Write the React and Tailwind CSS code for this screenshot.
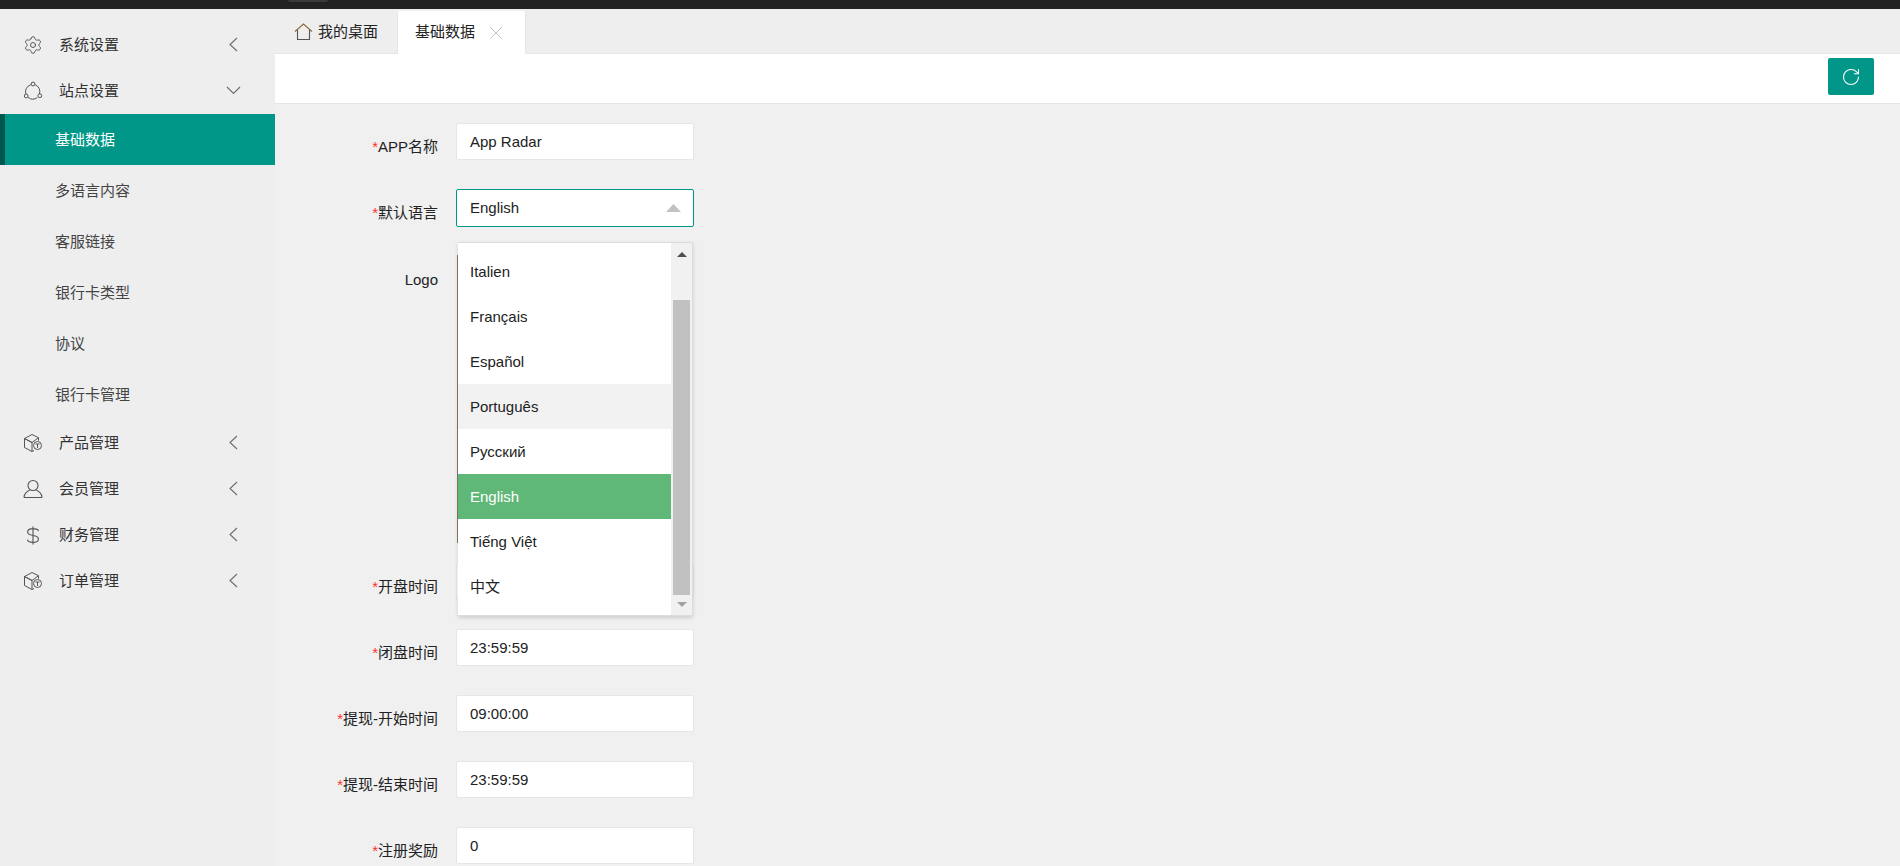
import React from "react";
import { RotateCw, X, Settings } from "lucide-react";

const Chevron = ({ down }) =>
  down ? (
    <svg width="15" height="9" viewBox="0 0 15 9" fill="none" stroke="#6b6b6b" strokeWidth="1.1" className="block">
      <path d="M1 1l6.5 6.5L14 1" />
    </svg>
  ) : (
    <svg width="9" height="15" viewBox="0 0 9 15" fill="none" stroke="#6b6b6b" strokeWidth="1.1" className="block">
      <path d="M8 1L1 7.5 8 14" />
    </svg>
  );

const Cube = () => (
  <svg width="20" height="20" viewBox="0 0 20 20" fill="none" stroke="#555" strokeWidth="1" className="block">
    <path d="M1.5 5.5L9 1.5l6.5 3.2v3M1.5 5.5v9L9 18.5v-9zM1.5 5.5L9 9.5l6.5-4.8M9 18.5l2-1" />
    <circle cx="14.5" cy="12.5" r="4" />
    <path d="M12.5 11h4M14.5 11v4" />
  </svg>
);

const Branch = () => (
  <svg width="20" height="20" viewBox="0 0 20 20" fill="none" stroke="#555" strokeWidth="1" className="block">
    <path d="M7.7 3.8A7.2 7.2 0 0 0 2.9 13M12.2 3.8A7.2 7.2 0 0 1 16.4 13M5.2 16.5a7.6 7.6 0 0 0 9.2 0" />
    <circle cx="10" cy="3" r="1.9" />
    <circle cx="3.2" cy="15" r="1.9" />
    <circle cx="16.8" cy="14.7" r="1.9" />
  </svg>
);

const User = () => (
  <svg width="20" height="20" viewBox="0 0 20 20" fill="none" stroke="#555" strokeWidth="1.1" className="block">
    <circle cx="10" cy="6.5" r="5" />
    <path d="M1 18.5c0-3.8 3.5-6.5 5.8-7.2M19 18.5c0-3.8-3.5-6.5-5.8-7.2M1 18.5h18" />
  </svg>
);

const Dollar = () => (
  <svg width="14" height="19" viewBox="0 0 14 19" fill="none" stroke="#555" strokeWidth="1.1" className="block">
    <path d="M7 0.5v18M12.5 5C12 3 10 2.6 7 2.6 3.8 2.6 1.6 4 1.6 6.1c0 2.3 2.3 2.9 5.4 3.4 3.1.5 5.4 1.1 5.4 3.4 0 2.1-2.2 3.5-5.4 3.5-3.2 0-5.2-.7-5.6-2.7" />
  </svg>
);

const Home = () => (
  <svg width="19" height="18" viewBox="0 0 19 18" fill="none" strokeWidth="1.1" className="block">
    <path d="M1 8.5L9.5 1 18 8.5" stroke="#8a6a3a" />
    <path d="M3.5 7v9.5h12V7" stroke="#555" />
  </svg>
);

const top = [
  { icon: <Settings size={24} strokeWidth={1.15} color="#555" className="-my-[2px]" />, label: "系统设置" },
  { icon: <Branch />, label: "站点设置", open: true },
];
const sub = ["基础数据", "多语言内容", "客服链接", "银行卡类型", "协议", "银行卡管理"];
const bottom = [
  { icon: <Cube />, label: "产品管理" },
  { icon: <User />, label: "会员管理" },
  { icon: <Dollar />, label: "财务管理" },
  { icon: <Cube />, label: "订单管理" },
];

const MenuRow = ({ icon, label, open }) => (
  <div className="flex h-[46px] items-center pl-[23px] text-[15px] text-[#333]">
    <span className="flex w-[20px] justify-center">{icon}</span>
    <span className="ml-[16px] w-[170px]">{label}</span>
    <span className={open ? "-ml-[3px] -mt-[2px]" : "-mt-[2px]"}>
      <Chevron down={open} />
    </span>
  </div>
);

const languages = ["Italien", "Français", "Español", "Português", "Русский", "English", "Tiếng Việt", "中文"];

const Label = ({ children, req = true }) => (
  <div className={"w-[163px] text-right text-[15px] leading-[24px] text-[#222] " + (req ? "pt-[12px]" : "pt-[13px]")}>
    {req && <span className="text-[#f33]">*</span>}
    {children}
  </div>
);

const Field = ({ label, value }) => (
  <div className="mb-[29px] flex">
    <Label>{label}</Label>
    <div className="ml-[18px] flex h-[37px] w-[238px] items-center rounded-[2px] border border-[#e6e6e6] bg-white pl-[13px] pt-[2px] text-[15px] text-[#222]">
      {value}
    </div>
  </div>
);

const Dropdown = () => (
  <div className="absolute left-[2px] top-[53px] z-10 flex h-[374px] w-[235px] border border-l-0 border-[#dcdcdc] bg-white shadow-[0_2px_4px_rgba(0,0,0,0.14)]">
    <div className="flex-1 py-[6px]">
      {languages.map((l) => (
        <div
          key={l}
          className={
            "flex h-[45px] items-center pl-[12px] pt-[2px] text-[15px] " +
            (l === "English"
              ? "bg-[#5fb878] text-white"
              : l === "Português"
                ? "bg-[#f2f2f2] text-[#222]"
                : "text-[#222]")
          }
        >
          {l}
        </div>
      ))}
    </div>
    <div className="flex w-[21px] flex-col items-center bg-[#f1f1f1]">
      <div className="flex h-[57px] w-full justify-center pt-[9px]">
        <svg width="10" height="5" viewBox="0 0 10 5" className="block">
          <path d="M5 0l5 5H0z" fill="#505050" />
        </svg>
      </div>
      <div className="h-[295px] w-[17px] bg-[#c1c1c1]" />
      <div className="flex w-full justify-center pt-[7px]">
        <svg width="10" height="5" viewBox="0 0 10 5" className="block">
          <path d="M0 0h10L5 5z" fill="#a3a3a3" />
        </svg>
      </div>
    </div>
  </div>
);

export default function App() {
  return (
    <div className="flex h-[866px] flex-col overflow-hidden bg-[#f0f0f0] font-['Liberation_Sans','Noto_Sans_CJK_SC',sans-serif]">
      <div className="h-[9px] shrink-0 bg-[#222]">
        <div className="ml-[288px] h-[2px] w-[40px] rounded-b-[2px] bg-[#3a3a3a]" />
      </div>
      <div className="flex min-h-0 flex-1">
        <aside className="w-[275px] shrink-0 bg-[#eeeeef] pt-[13px]">
          {top.map((m) => (
            <MenuRow key={m.label} {...m} />
          ))}
          <div>
            {sub.map((s, i) => (
              <div
                key={s}
                className={
                  "flex h-[51px] items-center pt-[2px] text-[15px] " +
                  (i === 0
                    ? "border-l-[5px] border-[#00574f] bg-[#009688] pl-[50px] text-white"
                    : "pl-[55px] text-[#444]")
                }
              >
                {s}
              </div>
            ))}
          </div>
          <div>
            {bottom.map((m) => (
              <MenuRow key={m.label} {...m} />
            ))}
          </div>
        </aside>
        <main className="min-w-0 flex-1">
          <div className="flex h-[45px] border-b border-[#e6e6e6] bg-[#eeeeef] pt-[2px]">
            <div className="flex h-[42px] w-[122px] items-center pl-[19px] text-[15px] text-[#222]">
              <Home />
              <span className="ml-[5px]">我的桌面</span>
            </div>
            <div className="-mb-[1px] flex h-[43px] w-[129px] items-center rounded-t-[2px] border-x border-[#e6e6e6] bg-white pl-[17px] text-[15px] text-[#222]">
              <span>基础数据</span>
              <X size={22} strokeWidth={0.9} color="#b5b5b5" className="ml-[10px]" />
            </div>
          </div>
          <div className="flex h-[50px] items-start justify-end border-b border-[#e6e6e6] bg-white pr-[26px] pt-[4px]">
            <button className="flex h-[37px] w-[46px] items-center justify-center rounded-[2px] bg-[#009688]">
              <RotateCw size={20} strokeWidth={1.3} color="#fff" />
            </button>
          </div>
          <div className="pt-[19px]">
            <Field label="APP名称" value="App Radar" />
            <div className="mb-[28px] flex">
              <Label>默认语言</Label>
              <div className="relative ml-[18px] w-[238px]">
                <div className="flex h-[38px] items-center justify-between rounded-[2px] border border-[#009688] bg-white pl-[13px] pr-[12px] text-[15px] text-[#222]">
                  English
                  <svg width="15" height="8" viewBox="0 0 15 8" className="block">
                    <path d="M7.5 0L15 8H0z" fill="#c2c2c2" />
                  </svg>
                </div>
                <Dropdown />
              </div>
            </div>
            <div className="mb-[20px] flex">
              <Label req={false}>Logo</Label>
              <div className="ml-[19px] h-[288px] w-[230px] bg-[#8a7565]" />
            </div>
            <Field label="开盘时间" value="" />
            <Field label="闭盘时间" value="23:59:59" />
            <Field label="提现-开始时间" value="09:00:00" />
            <Field label="提现-结束时间" value="23:59:59" />
            <Field label="注册奖励" value="0" />
          </div>
        </main>
      </div>
    </div>
  );
}
